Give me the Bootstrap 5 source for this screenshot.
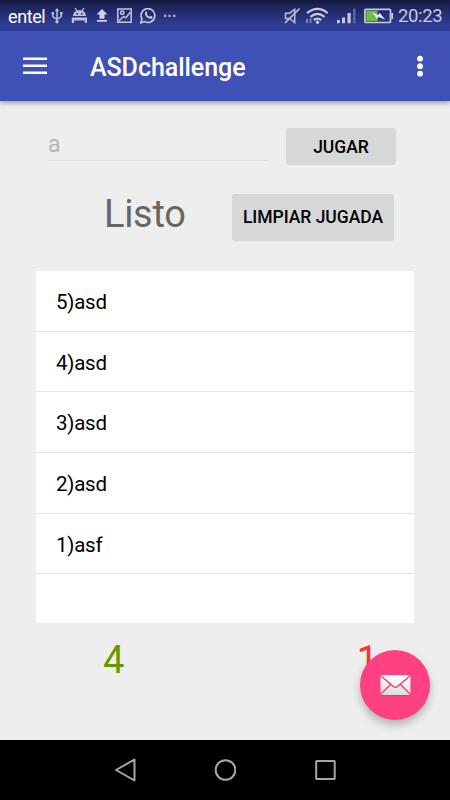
<!DOCTYPE html>
<html lang="es">
<head>
<meta charset="utf-8">
<meta name="viewport" content="width=device-width, initial-scale=1">
<title>ASDchallenge</title>
<link href="https://cdn.jsdelivr.net/npm/bootstrap@5.3.0/dist/css/bootstrap.min.css" rel="stylesheet">
<style>
body{font-family:Roboto,"Liberation Sans",sans-serif;background:#eee;color:#000}
svg{display:block;flex:none}
.screen{width:450px;height:800px;overflow:hidden}
.statusbar{height:31px;padding:1px 8px 0;background:linear-gradient(#14183c 0,#1f2763 28%,#2b3786 65%,#303f9f 100%);color:#c5c9e3;font-size:18px}
.carrier{color:#fff;width:43px;font-size:18px;letter-spacing:-.4px;padding-top:1px}
.clock{width:44px;font-size:18.5px;letter-spacing:-.35px;padding-top:1px}
.appbar{height:70px;background:#3f51b5;padding:0 24px 0 23px;box-shadow:0 2px 5px rgba(0,0,0,.35);z-index:1}
.app-title{font-size:25px;font-weight:500;margin-left:43px;line-height:30px;padding-top:3px;letter-spacing:-.05px}
.menu-btn,.more-btn{background:none;border:0}
.content-area{height:639px;padding:27px 36px 0}
.entry{width:221px;height:33px;margin-left:12px;border:0;border-bottom:1px solid #dfdfdf;border-radius:0;background:none;padding:1px 0 0;font-size:23px;line-height:30px}
.entry::placeholder{color:#b5b5b5;opacity:1}
.entry:focus{background:none;box-shadow:none}
.raised{background:#d6d8d7;color:#000;border:0;border-radius:3px;font-size:17.5px;font-weight:500;padding:2px 0 0;box-shadow:0 1px 1px rgba(0,0,0,.1)}
.play{width:110px;height:36px;margin-right:18px;margin-bottom:1px}
.clear{width:162px;height:46px;margin-right:20px;letter-spacing:-.03px}
.state{font-size:38px;line-height:42px;padding-bottom:5px;color:#666;margin-left:68px;letter-spacing:-.3px}
.plays{height:352px;margin-top:31px;background:#fff}
.plays .list-group-item{height:60.7px;padding:3px 20px 0;border:0;border-bottom:1px solid #e3e3e3!important;font-size:20.5px;letter-spacing:-.25px;color:#000;background:none}
.score{font-size:38px;line-height:46px;padding:14px 36px 0 67px}
.wins{color:#669900}
.losses{color:#ff3333}
.fab{right:20px;bottom:20px;width:70px;height:70px;background:#ff4081;border:0;box-shadow:0 5px 8px rgba(0,0,0,.25)}
.fab:hover{background:#ff4081}
.navkeys{height:60px;gap:78px;background:#000}
</style>
<script src="https://cdn.jsdelivr.net/npm/bootstrap@5.3.0/dist/js/bootstrap.bundle.min.js"></script>
</head>
<body>
<div class="screen d-flex flex-column">
  <div class="statusbar d-flex align-items-center justify-content-between">
    <div class="d-flex align-items-center">
      <span class="carrier">entel</span>
      <svg width="12" height="16" viewBox="51 8 12 16" fill="none" stroke="#b9bedd" stroke-width="1.5"><path d="M57 10v11M52.8 13.5v2.5q0 1.5 4.2 3 4.2-1.500 4.200-3v-2.500"/><path d="M57 8l2.300 3.200h-4.600zM51.600 12h2.500v2.500h-2.500zM60 12h2.500v2.500H60z" fill="#b9bedd" stroke="none"/><circle cx="57" cy="21.800" r="1.700" fill="#b9bedd" stroke="none"/></svg>
      <svg class="ms-2" width="16" height="16" viewBox="71 8 16 16"><path d="M71.800 17.600h15.200v5.400h-2.200v-2.600H74v2.600h-2.200zM73 16c0-7.800 13-7.800 13 0z" fill="#b9bedd"/><path d="M75 8l2.200 3.200m6.800-3.200l-2.200 3.200" stroke="#b9bedd" stroke-width="1.200"/><path d="M76.300 13.700h1.700m3 0h1.700" stroke="#29347d" stroke-width="1.500"/></svg>
      <svg class="ms-2" width="14" height="16" viewBox="95 8 14 16" fill="#d0d3e8"><path d="M102 9l5.500 5.500h-3v4.200h-5v-4.200h-3zM97 20h10v1.700H97z"/></svg>
      <svg class="ms-2" width="15" height="16" viewBox="117 8 15 16" fill="none" stroke="#c5c9e3" stroke-width="1.500"><path d="M117.800 9h13.400v13.300h-13.400z"/><circle cx="122.300" cy="12.800" r="1.700"/><path d="M119 20.800l4.500-4.300 2.300 1.300 4.700-5.800" stroke-width="1.400"/></svg>
      <svg class="ms-2" width="16" height="16" viewBox="139 8 16 16"><path d="M139.800 22.800l1.200-3.800a6.900 6.900 0 1 1 2.700 2.600z" fill="none" stroke="#c5c9e3" stroke-width="1.600"/><path d="M144.500 11.800c.7-.7 1.500-.2 1.700.8.3 1-.6 1.200-.3 1.700.6 1.300 1.500 2 2.600 2.400.6.200.9-1.200 1.700-.8 1 .5 1.800.8 1.200 1.800-2 3.500-9.500-2-6.900-5.900z" fill="#c5c9e3"/></svg>
      <svg class="ms-2" width="13" height="16" viewBox="164 8 13 16" fill="#b0b5d8"><path d="M164 14.700h2.200v2.200H164zM168.500 14.700h2.200v2.200h-2.200zM173.200 14.700h2.200v2.200h-2.200z"/></svg>
    </div>
    <div class="d-flex align-items-center">
      <svg width="18" height="18" viewBox="283 7 18 18" fill="none" stroke="#b9bedd" stroke-width="1.500"><path d="M286.500 13.200h4.200l5-4v13.500l-5-4.200h-4.200z"/><path d="M300.500 8.500l-14.500 14.500" stroke-width="1.700"/></svg>
      <svg class="ms-1" width="24" height="18" viewBox="304 7 24 18" fill="none" stroke="#c5c9e3" stroke-width="2.200"><path d="M307 13.200q10.500-8.500 20.800 0M310.500 16.800q7-5.700 14 0M313.800 20q3.700-2.800 7.400 0"/><circle cx="317.500" cy="22.300" r="1.700" fill="#c5c9e3" stroke="none"/><path d="M307 19v4M310.500 18.500v4.500" stroke="#8d93c0" stroke-width="1.700"/></svg>
      <svg class="ms-2" width="20" height="18" viewBox="336 7 20 18" fill="#c5c9e3"><path d="M337 20h2.800v3.300H337zM342 17.500h3v5.800h-3zM347.500 13h3.200v10.300h-3.200z"/><path d="M353 8.500h2.500v14.800H353z" fill="#5c659f"/></svg>
      <svg class="ms-2" width="30" height="18" viewBox="365 7 30 18"><rect x="365.900" y="9.300" width="25.600" height="13.200" rx="1" fill="none" stroke="#c5c9e3" stroke-width="1.700"/><path d="M392.300 13h1.800v6h-1.800z" fill="#c5c9e3"/><path d="M367.200 10.700H378.500v10.500h-11.300z" fill="#6fbf45"/><path d="M373 12l6 3.200 1.600-2.400 5.500 6.800-6.500-2.500-1.500 2z" fill="#e3e5f2"/></svg>
      <span class="clock text-nowrap ms-1">20:23</span>
    </div>
  </div>
  <header class="appbar d-flex align-items-center text-white position-relative">
    <button class="menu-btn p-0" aria-label="Menú"><svg width="24" height="18" fill="#fff"><path d="M0 .5h24V3H0zM0 7.500h24V10H0zM0 14.500h24V17H0z"/></svg></button>
    <h1 class="app-title mb-0">ASDchallenge</h1>
    <button class="more-btn p-0 ms-auto" aria-label="Más opciones"><svg width="12" height="22" fill="#fff"><circle cx="6" cy="3.700" r="2.900"/><circle cx="6" cy="11.200" r="2.900"/><circle cx="6" cy="18.700" r="2.900"/></svg></button>
  </header>
  <main class="content-area position-relative">
    <div class="d-flex justify-content-between align-items-start">
      <input class="form-control entry" placeholder="a" aria-label="Jugada">
      <button class="btn raised play">JUGAR</button>
    </div>
    <div class="d-flex justify-content-between align-items-center pt-1 mt-4">
      <div class="state">Listo</div>
      <button class="btn raised clear">LIMPIAR JUGADA</button>
    </div>
    <div class="plays">
      <ul class="list-group list-group-flush">
        <li class="list-group-item d-flex align-items-center">5)asd</li>
        <li class="list-group-item d-flex align-items-center">4)asd</li>
        <li class="list-group-item d-flex align-items-center">3)asd</li>
        <li class="list-group-item d-flex align-items-center">2)asd</li>
        <li class="list-group-item d-flex align-items-center">1)asf</li>
      </ul>
    </div>
    <div class="score d-flex justify-content-between"><span class="wins">4</span><span class="losses">1</span></div>
    <button class="fab btn rounded-circle position-absolute p-0 d-flex align-items-center justify-content-center" aria-label="Mensaje">
      <svg width="31" height="22" viewBox="0 0 31 22"><defs><linearGradient id="paper" x2="0" y2="1"><stop stop-color="#fff"/><stop offset="1" stop-color="#ddd"/></linearGradient></defs><rect x=".5" y="1.500" width="30" height="20" rx="1" fill="#c8356a"/><rect x=".5" y="1" width="30" height="20" rx="1" fill="url(#paper)"/><path d="M.5 1.500l13 11q2 1.500 4 0l13-11M.5 20.500l10-10M30.500 20.500l-10-10" fill="none" stroke="#f03c79" stroke-width="1.400"/></svg>
    </button>
  </main>
  <nav class="navkeys d-flex align-items-center justify-content-center">
    <svg width="22" height="24" fill="none" stroke="#a6a6a6" stroke-width="2"><path d="M2 12L20.500 1.500v21z" stroke-linejoin="round"/></svg>
    <svg width="22" height="24" fill="none" stroke="#a6a6a6" stroke-width="2"><circle cx="11.500" cy="12" r="9.800"/></svg>
    <svg width="22" height="24" fill="none" stroke="#a6a6a6" stroke-width="2"><rect x="2.200" y="3" width="18.500" height="18" rx=".5"/></svg>
  </nav>
</div>
</body>
</html>
